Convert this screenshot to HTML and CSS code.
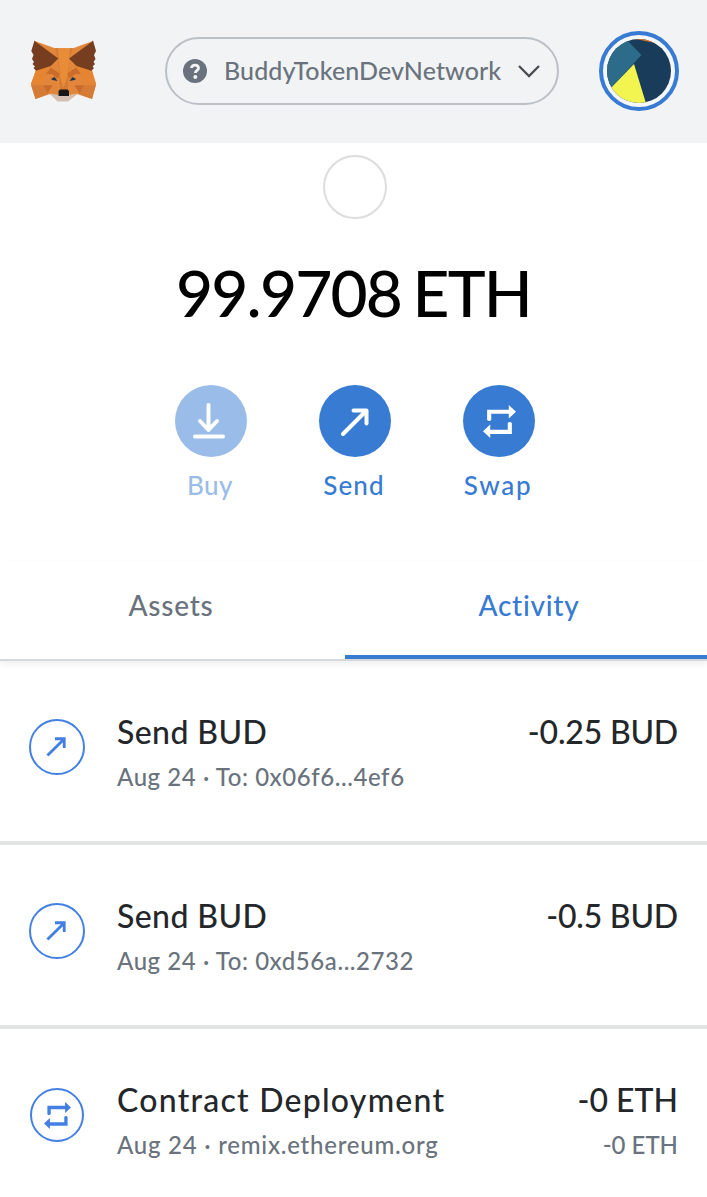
FILE: index.html
```html
<!DOCTYPE html>
<html lang="en">
<head>
<meta charset="utf-8">
<title>Wallet</title>
<link rel="stylesheet" href="styles.css">
</head>
<body>
<svg width="0" height="0" class="defs">
  <symbol id="arrow" viewBox="0 0 28 28"><path d="M2 26 25 3M12.500 2.500H25.500V15.500"/></symbol>
  <symbol id="swap" viewBox="0 0 32 32"><path d="M4 14.500V4.500H25V0L32 6.500 25 13V8.500H8V14.500Q6 16.500 4 14.500ZM28 17.500V28H7V32L0 25.500 7 19V24H24V17.500Q26 15.500 28 17.500Z"/></symbol>
</svg>
<header class="header">
  <svg class="fox" viewBox="0 0 68 62">
    <path fill="#e1863b" d="M4.500 1 25 8.300H43L63 1 62 30 66 44 62 59 47 54 38 61H28L20 54 5.500 59 1 44 6 30Z"/>
    <path fill="#e98c38" d="M25 8.300H43L39 19V50H28V19Z"/>
    <path fill="#d47c35" d="M28 8.300 30 36 33.500 48 37.500 36 40 8.300 43 8.300 39 19 38 50H29.500L28 19 25 8.300Z"/>
    <path fill="#e58531" d="M6 30 20.700 26 16 34 13 45 1 44ZM61.500 30 46.500 26 51 34 54 45 66 44Z"/>
    <path fill="#763e1f" d="M4.500.5 6 2 28.300 18.500 20.700 26 6 30.800 3.500 28 5 26.500 2.500 24 4 22 2 19 3.500 15 1.300 11ZM63 .5 61.500 2 39 18.500 46.500 26 61.500 30.800 64 28 62.500 26.500 65 24 63.500 22 65.500 19 64 15 66 11Z"/>
    <path fill="#cb6c2b" d="M16 34 21 27.500 29.500 33.500 28 39 22 34ZM51 34 46 27.500 37.500 33.500 39 39 45 34Z"/>
    <path fill="#d57b36" d="m1 45 12.500.5L18 54 5.500 59ZM66 45l-12.500.5L49 54 62 59Z"/>
    <path fill="#c96b2c" d="M13.300 45.300H22.500L17.700 53.500ZM54 45.300H44.500L49.500 53.500Z"/>
    <path fill="#d5bfb2" d="m20 53.500 8 1.500 1-4h9.500l1 4 7-1.500-8.500 8H27.500Z"/>
    <path fill="#243447" d="m21 39 3.500-2 3 4-5-1ZM46 39l-3.500-2-3 4 5-1Z"/>
    <path fill="#161616" d="m28.500 51 1.500-1.500h7.500L39 51v5H28.500Z"/>
  </svg>
  <div class="network">
    <svg class="help" viewBox="0 0 24 24"><circle cx="12" cy="12" r="12"/><path d="M8.500 9C8.500 5.200 15.500 5.200 15.500 9.200 15.500 11.400 12.400 11.400 12.400 14"/><circle class="dot" cx="12.300" cy="18" r="2"/></svg>
    <span class="network-name">BuddyTokenDevNetwork</span>
    <svg class="chevron" viewBox="0 0 22 13"><path d="m1 1 10 10L21 1"/></svg>
  </div>
  <svg class="avatar" viewBox="0 0 80 80">
    <defs><clipPath id="face"><circle cx="40" cy="40" r="32"/></clipPath></defs>
    <circle class="ring" cx="40" cy="40" r="38"/>
    <g clip-path="url(#face)"><path fill="#193c5b" d="M0 0h80v80H0z"/><path fill="#2d6b8b" d="M24 5 42.500 24 7 62H0V0Z"/><path fill="#f2f550" d="M35 33 47.500 74H5V64Z"/><path fill="#ee7623" d="M37 8 56 12V6H37Z"/></g>
  </svg>
</header>
<main>
  <section class="overview">
    <div class="token"></div>
    <div class="balance">99.9708 ETH</div>
    <div class="actions">
      <div class="action disabled"><span class="disc"><svg class="buy-icon" viewBox="0 0 32 36"><path d="M15.500 2V27M7 18l8.500 9L24 18M2 33.500H30"/></svg></span><span class="label buy">Buy</span></div>
      <div class="action"><span class="disc"><svg class="send-icon"><use href="#arrow"/></svg></span><span class="label send">Send</span></div>
      <div class="action"><span class="disc"><svg class="swap-icon"><use href="#swap"/></svg></span><span class="label swap">Swap</span></div>
    </div>
  </section>
  <nav class="tabs"><div class="tab assets"><span>Assets</span></div><div class="tab active"><span>Activity</span></div></nav>
  <section class="list">
    <article class="item"><span class="badge"><svg class="send-small"><use href="#arrow"/></svg></span><div class="text"><div class="title t-send">Send BUD</div><div class="sub s-one">Aug 24 · To: 0x06f6...4ef6</div></div><div class="amounts"><div class="title a-bud">-0.25 BUD</div></div></article>
    <article class="item"><span class="badge"><svg class="send-small"><use href="#arrow"/></svg></span><div class="text"><div class="title t-send">Send BUD</div><div class="sub s-one">Aug 24 · To: 0xd56a...2732</div></div><div class="amounts"><div class="title a-bud">-0.5 BUD</div></div></article>
    <article class="item"><span class="badge contract"><svg class="swap-small"><use href="#swap"/></svg></span><div class="text"><div class="title t-contract">Contract Deployment</div><div class="sub s-three">Aug 24 · remix.ethereum.org</div></div><div class="amounts"><div class="title">-0 ETH</div><div class="sub">-0 ETH</div></div></article>
  </section>
</main>
</body>
</html>
```
FILE: styles.css
```css
* { box-sizing: border-box; }
body { margin: 0; width: 707px; height: 1197px; overflow: hidden; background: #fff; font-family: Lato, sans-serif; font-weight: 500; font-variant-ligatures: none; color: #24272a; white-space: nowrap; }
svg { display: block; flex: none; fill: none; }
.defs { position: absolute; }
.header { height: 143px; padding: 0 28px 1px 30px; display: flex; align-items: center; background: #f2f3f5; }
.fox { width: 68px; height: 62px; }
.network { width: 394px; height: 68px; margin-left: 67px; border: 2px solid #bbc0c5; border-radius: 34px; padding: 0 17px 0 16px; display: flex; align-items: center; color: #6a737d; }
.help { width: 24px; height: 24px; fill: #6a737d; }
.help path { fill: none; stroke: #f2f3f5; stroke-width: 2.800; }
.help .dot { fill: #f2f3f5; }
.network-name { width: 278px; margin: -2px 0 0 17px; font-size: 25px; letter-spacing: .1px; }
.chevron { width: 22px; height: 13px; margin-left: auto; stroke: #4a4d50; stroke-width: 2.300; }
.avatar { width: 80px; height: 80px; margin-left: auto; }
.ring { fill: #f5f6f7; stroke: #377bd2; stroke-width: 4; }
.overview { height: 418px; padding-top: 12px; display: flex; flex-direction: column; align-items: center; }
.token { width: 64px; height: 64px; margin-left: 3px; border: 2px solid #ddd; border-radius: 50%; }
.balance { margin-top: 34px; height: 80px; line-height: 80px; font-size: 64px; letter-spacing: -1.800px; word-spacing: -3px; color: #000; }
.actions { margin: 52px 0 0 3px; display: flex; gap: 72px; }
.action { width: 72px; display: flex; flex-direction: column; align-items: center; color: #377bd2; }
.disabled { opacity: .5; }
.disc { width: 72px; height: 72px; border-radius: 50%; background: #377bd2; display: grid; place-items: center; }
.disc svg { stroke: #fff; stroke-width: 4; stroke-linecap: round; stroke-linejoin: round; }
.buy-icon { width: 32px; height: 36px; margin-right: 4px; }
.send-icon { width: 28px; height: 28px; margin-top: 2px; }
.disc .swap-icon { width: 33px; height: 33px; margin-top: 1px; fill: #fff; stroke: none; }
.label { margin: 13px 2px 0 0; line-height: 31px; font-size: 26px; }
.buy { letter-spacing: .4px; }
.send { letter-spacing: 1.100px; }
.swap { letter-spacing: 1.700px; }
.tabs { height: 100px; display: flex; border-bottom: 2px solid #d6d9dc; box-shadow: 0 3px 6px #0001; font-size: 28px; line-height: 36px; color: #6a737d; }
.tab { padding-top: 26px; display: flex; justify-content: center; }
.assets { width: 345px; padding-right: 3px; letter-spacing: .750px; }
.active { width: 362px; padding-left: 6px; border-bottom: 4px solid #377bd2; color: #377bd2; letter-spacing: .750px; }
.item { height: 184px; padding: 51px 29px 0; display: flex; border-bottom: 4px solid #e2e4e3; }
.item:last-child { border: 0; }
.badge { width: 56px; height: 56px; margin-top: 7px; flex: none; border: 2px solid #4480e4; border-radius: 50%; display: grid; place-items: center; }
.send-small { width: 20px; height: 20px; margin: -1px 0 0 -3px; stroke: #4480e4; stroke-width: 4; }
.contract { width: 54px; height: 54px; margin: 8px 1px 0; }
.swap-small { width: 27px; height: 27px; fill: #4480e4; }
.text { margin-left: 32px; }
.amounts { margin-left: auto; text-align: right; }
.title { font-size: 32px; line-height: 40px; }
.sub { margin-top: 9px; font-size: 24px; line-height: 31px; color: #6a737d; }
.t-send { letter-spacing: .4px; }
.t-contract { letter-spacing: 1.250px; }
.s-one { letter-spacing: .570px; }
.s-three { letter-spacing: .760px; }
.a-bud { letter-spacing: -.200px; }
```
